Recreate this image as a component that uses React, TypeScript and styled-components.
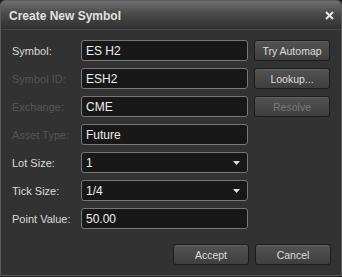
import React from 'react';
import styled, { createGlobalStyle } from 'styled-components';

const Global = createGlobalStyle`
  html, body {
    margin: 0;
    padding: 0;
    background: #1e1e1e;
  }
`;

const Dialog = styled.div`
  box-sizing: border-box;
  width: 342px;
  height: 276px;
  background: #323232;
  border: 1px solid #5c5c5c;
  border-radius: 5px 5px 0 0;
  font-family: 'Liberation Sans', Arial, sans-serif;
  overflow: hidden;
`;

const TitleBar = styled.div`
  display: flex;
  align-items: center;
  justify-content: space-between;
  height: 28px;
  padding: 0 7px 0 8px;
  background: linear-gradient(#6e6e6e, #4a4a4a 45%, #2f2f2f);
  border-bottom: 1px solid #484848;
`;

const Title = styled.span`
  color: #e2e2e2;
  font-size: 12px;
  font-weight: bold;
  padding-top: 1px;
`;

const Body = styled.div`
  display: grid;
  grid-template-columns: 63px 167px 76px;
  grid-auto-rows: 21px;
  column-gap: 6px;
  row-gap: 7px;
  padding: 10px 0 0 11px;
`;

const Label = styled.label<{ $disabled?: boolean }>`
  display: flex;
  align-items: center;
  white-space: nowrap;
  font-size: 11px;
  color: ${(p) => (p.$disabled ? '#555' : '#dcdcdc')};
`;

const Field = styled.div`
  box-sizing: border-box;
  display: flex;
  align-items: center;
  justify-content: space-between;
  padding: 0 7px 0 4px;
  background: #181818;
  border: 1px solid #777;
  border-radius: 3px;
  color: #eee;
  font-size: 12px;
`;

const Button = styled.button<{ $disabled?: boolean }>`
  box-sizing: border-box;
  width: 76px;
  height: 21px;
  padding: 0;
  font-family: 'Liberation Sans', Arial, sans-serif;
  font-size: 10.5px;
  color: ${(p) => (p.$disabled ? '#7a7a7a' : '#dedede')};
  background: linear-gradient(#535353, #3e3e3e);
  border: 1px solid #1c1c1c;
  border-radius: 3px;
  box-shadow: inset 0 1px 0 rgba(255, 255, 255, 0.08);
`;

const Footer = styled.div`
  display: flex;
  justify-content: flex-end;
  gap: 6px;
  padding: 15px 10px 0 0;
`;

const Caret = () => (
  <svg width="7" height="4" viewBox="0 0 7 4">
    <path d="M0 0H7L3.5 4Z" fill="#e0e0e0" />
  </svg>
);

const Close = () => (
  <svg width="9" height="9" viewBox="0 0 9 9">
    <path d="M1 1L8 8M8 1L1 8" stroke="#e8e8e8" strokeWidth="2" />
  </svg>
);

interface Row {
  label: string;
  value: string;
  disabled?: boolean;
  select?: boolean;
  action?: string;
  actionDisabled?: boolean;
}

const rows: Row[] = [
  { label: 'Symbol:', value: 'ES H2', action: 'Try Automap' },
  { label: 'Symbol ID:', value: 'ESH2', disabled: true, action: 'Lookup...' },
  { label: 'Exchange:', value: 'CME', disabled: true, action: 'Resolve', actionDisabled: true },
  { label: 'Asset Type:', value: 'Future', disabled: true },
  { label: 'Lot Size:', value: '1', select: true },
  { label: 'Tick Size:', value: '1/4', select: true },
  { label: 'Point Value:', value: '50.00' },
];

export default function App() {
  return (
    <>
      <Global />
      <Dialog>
        <TitleBar>
          <Title>Create New Symbol</Title>
          <Close />
        </TitleBar>
        <Body>
          {rows.map((r) => (
            <React.Fragment key={r.label}>
              <Label $disabled={r.disabled}>{r.label}</Label>
              <Field>
                {r.value}
                {r.select && <Caret />}
              </Field>
              {r.action ? <Button $disabled={r.actionDisabled}>{r.action}</Button> : <span />}
            </React.Fragment>
          ))}
        </Body>
        <Footer>
          <Button>Accept</Button>
          <Button>Cancel</Button>
        </Footer>
      </Dialog>
    </>
  );
}
